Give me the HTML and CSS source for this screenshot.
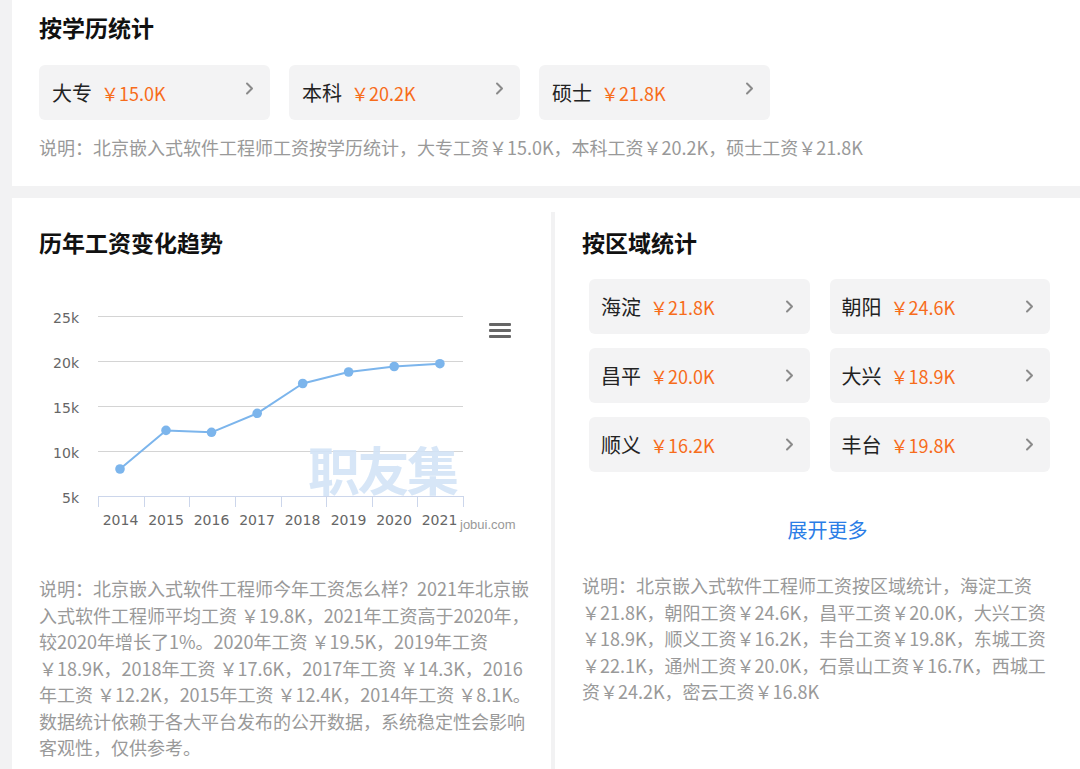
FILE: index.html
```html
<!DOCTYPE html>
<html lang="zh-CN">
<head>
<meta charset="utf-8">
<title>北京嵌入式软件工程师工资</title>
<link rel="stylesheet" href="styles.css">
</head>
<body>
<div class="page">
  <section class="panel edu">
    <h2 class="title">按学历统计</h2>
    <div class="edu-cards">
      <a class="stat-card edu-card"><span class="label">大专</span><span class="price">￥15.0K</span><svg class="chev" width="9" height="13" viewBox="0 0 9 13"><path d="M2 1.5 L7 6.5 L2 11.5" /></svg></a>
      <a class="stat-card edu-card"><span class="label">本科</span><span class="price">￥20.2K</span><svg class="chev" width="9" height="13" viewBox="0 0 9 13"><path d="M2 1.5 L7 6.5 L2 11.5" /></svg></a>
      <a class="stat-card edu-card"><span class="label">硕士</span><span class="price">￥21.8K</span><svg class="chev" width="9" height="13" viewBox="0 0 9 13"><path d="M2 1.5 L7 6.5 L2 11.5" /></svg></a>
    </div>
    <p class="note edu-note">说明：北京嵌入式软件工程师工资按学历统计，大专工资￥15.0K，本科工资￥20.2K，硕士工资￥21.8K</p>
  </section>

  <div class="row">
    <section class="col trend">
      <h2 class="title">历年工资变化趋势</h2>
      <svg class="chart" width="492" height="255" viewBox="0 0 492 255">
        <g stroke="#d4d4d4" stroke-width="1">
          <line x1="59" y1="31.5" x2="424" y2="31.5"/>
          <line x1="59" y1="76.5" x2="424" y2="76.5"/>
          <line x1="59" y1="121.5" x2="424" y2="121.5"/>
          <line x1="59" y1="166.5" x2="424" y2="166.5"/>
        </g>
        <text class="wm" x="269" y="206" textLength="151">职友集</text>
        <g stroke="#ccd6eb" stroke-width="1">
          <line x1="59" y1="211.5" x2="425" y2="211.5"/>
          <line x1="59.5" y1="211.5" x2="59.5" y2="222"/>
          <line x1="105.5" y1="211.5" x2="105.5" y2="222"/>
          <line x1="150.5" y1="211.5" x2="150.5" y2="222"/>
          <line x1="196.5" y1="211.5" x2="196.5" y2="222"/>
          <line x1="242.5" y1="211.5" x2="242.5" y2="222"/>
          <line x1="287.5" y1="211.5" x2="287.5" y2="222"/>
          <line x1="333.5" y1="211.5" x2="333.5" y2="222"/>
          <line x1="378.5" y1="211.5" x2="378.5" y2="222"/>
          <line x1="424.5" y1="211.5" x2="424.5" y2="222"/>
        </g>
        <g class="ylab">
          <text x="40" y="38">25k</text>
          <text x="40" y="83">20k</text>
          <text x="40" y="128">15k</text>
          <text x="40" y="173">10k</text>
          <text x="40" y="218">5k</text>
        </g>
        <g class="xlab">
          <text x="81.5" y="240">2014</text>
          <text x="127" y="240">2015</text>
          <text x="172.5" y="240">2016</text>
          <text x="218" y="240">2017</text>
          <text x="263.5" y="240">2018</text>
          <text x="309.5" y="240">2019</text>
          <text x="355" y="240">2020</text>
          <text x="400.5" y="240">2021</text>
        </g>
        <polyline fill="none" stroke="#7cb5ec" stroke-width="2" stroke-linejoin="round" points="81,184 127,145.4 172.5,147.3 218.2,128.3 263.7,98.5 309.6,87 355.2,81.5 400.9,78.7"/>
        <g fill="#7cb5ec">
          <circle cx="81" cy="184" r="4.8"/>
          <circle cx="127" cy="145.4" r="4.8"/>
          <circle cx="172.5" cy="147.3" r="4.8"/>
          <circle cx="218.2" cy="128.3" r="4.8"/>
          <circle cx="263.7" cy="98.5" r="4.8"/>
          <circle cx="309.6" cy="87" r="4.8"/>
          <circle cx="355.2" cy="81.5" r="4.8"/>
          <circle cx="400.9" cy="78.7" r="4.8"/>
        </g>
        <g fill="#666">
          <rect x="450" y="38" width="22" height="3" rx="1"/>
          <rect x="450" y="44" width="22" height="3" rx="1"/>
          <rect x="450" y="50" width="22" height="3" rx="1"/>
        </g>
        <text class="brand" x="421" y="244">jobui.com</text>
      </svg>
      <p class="note trend-note">说明：北京嵌入式软件工程师今年工资怎么样？2021年北京嵌入式软件工程师平均工资 ￥19.8K，2021年工资高于2020年，较2020年增长了1%。2020年工资 ￥19.5K，2019年工资 ￥18.9K，2018年工资 ￥17.6K，2017年工资 ￥14.3K，2016年工资 ￥12.2K，2015年工资 ￥12.4K，2014年工资 ￥8.1K。数据统计依赖于各大平台发布的公开数据，系统稳定性会影响客观性，仅供参考。</p>
    </section>

    <section class="col region">
      <h2 class="title">按区域统计</h2>
      <div class="region-cards">
        <a class="stat-card"><span class="label">海淀</span><span class="price">￥21.8K</span><svg class="chev" width="9" height="13" viewBox="0 0 9 13"><path d="M2 1.5 L7 6.5 L2 11.5" /></svg></a>
        <a class="stat-card"><span class="label">朝阳</span><span class="price">￥24.6K</span><svg class="chev" width="9" height="13" viewBox="0 0 9 13"><path d="M2 1.5 L7 6.5 L2 11.5" /></svg></a>
        <a class="stat-card"><span class="label">昌平</span><span class="price">￥20.0K</span><svg class="chev" width="9" height="13" viewBox="0 0 9 13"><path d="M2 1.5 L7 6.5 L2 11.5" /></svg></a>
        <a class="stat-card"><span class="label">大兴</span><span class="price">￥18.9K</span><svg class="chev" width="9" height="13" viewBox="0 0 9 13"><path d="M2 1.5 L7 6.5 L2 11.5" /></svg></a>
        <a class="stat-card"><span class="label">顺义</span><span class="price">￥16.2K</span><svg class="chev" width="9" height="13" viewBox="0 0 9 13"><path d="M2 1.5 L7 6.5 L2 11.5" /></svg></a>
        <a class="stat-card"><span class="label">丰台</span><span class="price">￥19.8K</span><svg class="chev" width="9" height="13" viewBox="0 0 9 13"><path d="M2 1.5 L7 6.5 L2 11.5" /></svg></a>
      </div>
      <div class="more">展开更多</div>
      <p class="note region-note">说明：北京嵌入式软件工程师工资按区域统计，海淀工资￥21.8K，朝阳工资￥24.6K，昌平工资￥20.0K，大兴工资￥18.9K，顺义工资￥16.2K，丰台工资￥19.8K，东城工资￥22.1K，通州工资￥20.0K，石景山工资￥16.7K，西城工资￥24.2K，密云工资￥16.8K</p>
    </section>
  </div>
</div>
</body>
</html>
```

FILE: styles.css
```css
html, body {
  margin: 0;
  padding: 0;
}

body {
  background: #f2f2f3;
  font-family: "Noto Sans CJK SC", "Noto Sans", sans-serif;
  color: #333;
  height: 769px;
  overflow: hidden;
}

.page {
  padding-left: 12px;
}

.panel,
.row {
  background: #fff;
}

.edu {
  height: 186px;
  box-sizing: border-box;
  padding: 12px 27px 0;
}

.title {
  margin: 0;
  font-size: 23px;
  line-height: 30px;
  font-weight: 700;
  color: #111;
}

.edu-cards {
  display: flex;
  gap: 19px;
  margin-top: 23px;
}

.stat-card {
  display: flex;
  align-items: center;
  height: 55px;
  box-sizing: border-box;
  background: #f3f3f4;
  border-radius: 6px;
  padding: 0 16px 0 12px;
  text-decoration: none;
}

.edu-card {
  width: 231px;
  padding-left: 13px;
}

.label {
  font-size: 20px;
  line-height: 26px;
  color: #222;
}

.price {
  margin-left: 9px;
  font-size: 18px;
  line-height: 26px;
  color: #f76c1b;
}

.chev {
  margin-left: auto;
  fill: none;
  stroke: #8a8a8a;
  stroke-width: 2;
  stroke-linecap: round;
  stroke-linejoin: round;
}

.edu-card .chev {
  margin-bottom: 9px;
}

.note {
  margin: 0;
  font-size: 18px;
  line-height: 26.5px;
  color: #999;
}

.edu-note {
  margin-top: 14px;
  white-space: nowrap;
}

.row {
  display: flex;
  margin-top: 12px;
  height: 571px;
}

.col {
  box-sizing: border-box;
}

.trend {
  width: 539px;
  padding: 29px 18px 0 27px;
}

.chart {
  display: block;
  margin-top: 28px;
}

.chart text {
  font-family: "DejaVu Sans", sans-serif;
}

.ylab text {
  font-size: 14px;
  fill: #666;
  text-anchor: end;
}

.xlab text {
  font-size: 14px;
  fill: #666;
  text-anchor: middle;
}

.chart .wm {
  font-family: "Noto Sans CJK SC", sans-serif;
  font-size: 52px;
  font-weight: 700;
  fill: #d3e4f7;
  opacity: 0.9;
}

.chart .brand {
  font-family: "Liberation Sans", sans-serif;
  font-size: 13px;
  fill: #999;
}

.trend-note {
  margin-top: 35px;
}

.region {
  flex: 1;
  margin-top: 14px;
  border-left: 4px solid #f2f2f3;
  padding: 15px 30px 0 27px;
}

.region-cards {
  display: grid;
  grid-template-columns: 1fr 1fr;
  column-gap: 20px;
  row-gap: 14px;
  margin-top: 22px;
  padding-left: 7px;
}

.more {
  margin-top: 43px;
  padding-left: 23px;
  text-align: center;
  font-size: 20px;
  line-height: 30px;
  color: #2a7de6;
}

.region-note {
  margin-top: 27px;
}
```
